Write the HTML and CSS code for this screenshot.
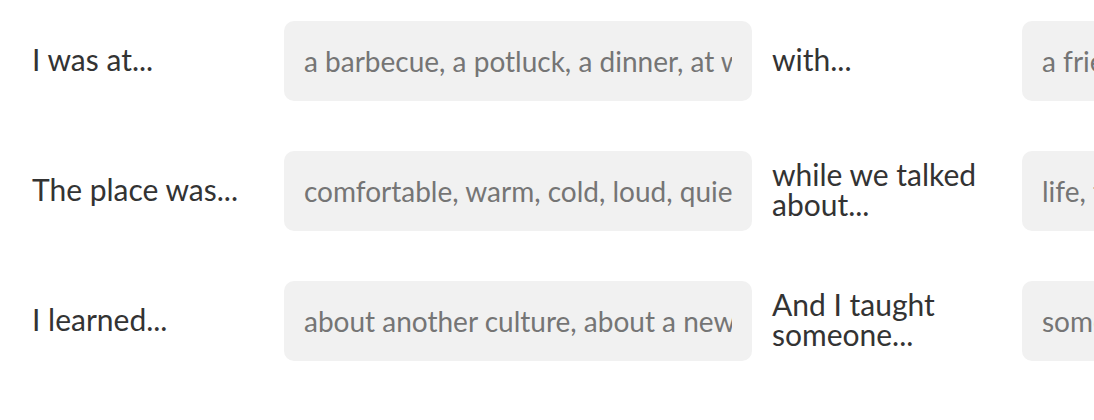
FILE: index.html
```html
<!DOCTYPE html>
<html lang="en">
<head>
<meta charset="utf-8">
<link rel="stylesheet" href="styles.css">
</head>
<body>
<form class="form">
  <label class="label" for="f1">I was at...</label>
  <input class="field" id="f1" type="text" placeholder="a barbecue, a potluck, a dinner, at work, at a party">
  <label class="label" for="f2">with...</label>
  <input class="field" id="f2" type="text" placeholder="a friend, my family, coworkers">

  <label class="label" for="f3">The place was...</label>
  <input class="field" id="f3" type="text" placeholder="comfortable, warm, cold, loud, quiet, crowded">
  <label class="label" for="f4">while we talked about...</label>
  <input class="field" id="f4" type="text" placeholder="life, the future, family, food">

  <label class="label" for="f5">I learned...</label>
  <input class="field" id="f5" type="text" placeholder="about another culture, about a new recipe">
  <label class="label" for="f6">And I taught someone...</label>
  <input class="field" id="f6" type="text" placeholder="something new, a recipe">
</form>
</body>
</html>
```
FILE: styles.css
```css
html, body {
  margin: 0;
  padding: 0;
  background: #ffffff;
  overflow: hidden;
}

body {
  font-family: Lato, "Open Sans", sans-serif;
}

.form {
  display: grid;
  grid-template-columns: 232px 468px 230px 468px;
  grid-auto-rows: 80px;
  column-gap: 20px;
  row-gap: 50px;
  align-items: center;
  padding: 21px 0 0 32px;
  width: max-content;
}

.label {
  font-size: 30px;
  line-height: 1;
  color: #333333;
  margin-bottom: 4px;
}

.field {
  box-sizing: border-box;
  height: 80px;
  width: 100%;
  border: none;
  outline: none;
  border-radius: 10px;
  background: #f1f1f1;
  padding: 0 20px;
  font-family: Lato, "Open Sans", sans-serif;
  font-size: 28px;
  color: #333333;
}

.field::placeholder {
  color: #757575;
  opacity: 1;
}
```
